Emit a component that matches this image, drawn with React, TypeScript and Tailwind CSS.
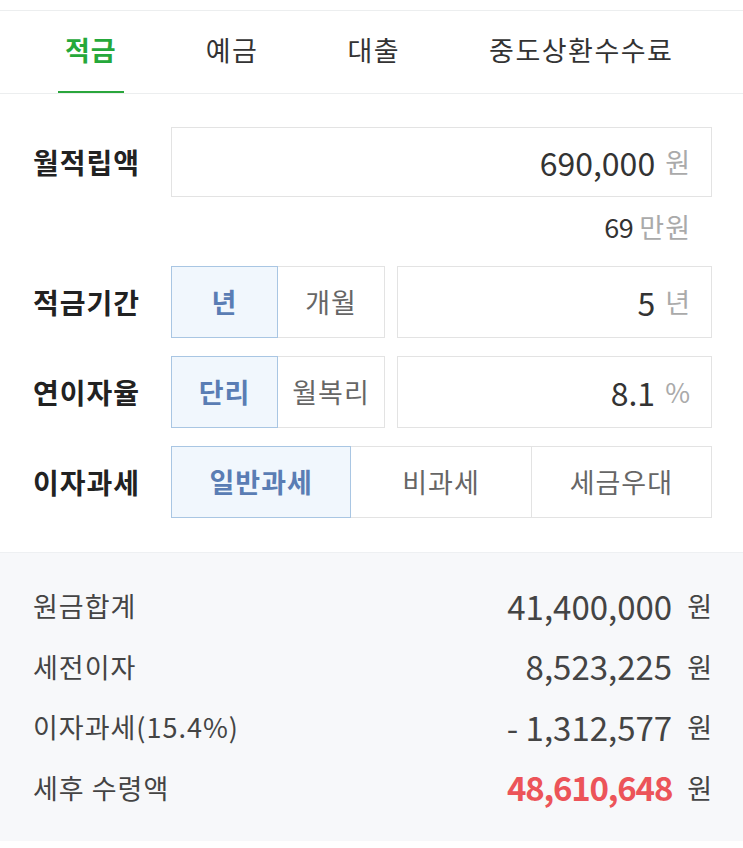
import { useState } from "react";

const tabs = ["적금", "예금", "대출", "중도상환수수료"];

const results = [
  { label: "원금합계", value: "41,400,000", red: false },
  { label: "세전이자", value: "8,523,225", red: false },
  { label: "이자과세(15.4%)", value: "- 1,312,577", red: false },
  { label: "세후 수령액", value: "48,610,648", red: true },
];

function Toggle({
  options,
  active,
  onChange,
  className,
}: {
  options: string[];
  active: number;
  onChange: (i: number) => void;
  className: string;
}) {
  return (
    <div className={className}>
      {options.map((o, i) => (
        <button
          key={o}
          onClick={() => onChange(i)}
          className={
            i === active
              ? "relative z-10 flex items-center justify-center border border-[#a9c6e3] bg-[#f1f7fd] text-[27px] font-bold tracking-[1px] text-[#5a7db4]"
              : "-ml-px flex items-center justify-center border border-[#e3e3e3] bg-white text-[27px] tracking-[1px] text-[#666]"
          }
        >
          {o}
        </button>
      ))}
    </div>
  );
}

function ValueBox({ value, unit }: { value: string; unit: string }) {
  return (
    <div className="flex flex-1 items-center justify-end gap-[10px] border border-[#e3e3e3] bg-white pr-[21px]">
      <span className="text-[32px] text-[#333]">{value}</span>
      <span className="text-[27px] text-[#aaa]">{unit}</span>
    </div>
  );
}

export default function App() {
  const [tab, setTab] = useState(0);
  const [period, setPeriod] = useState(0);
  const [rate, setRate] = useState(0);
  const [tax, setTax] = useState(0);

  return (
    <div className="min-h-[848px] bg-white pt-[10px] font-['Noto_Sans_CJK_KR',sans-serif]">
      {/* tabs */}
      <div className="flex h-[84px] gap-[75px] border-y border-[#eceeef] pl-[58px]">
        {tabs.map((t, i) => (
          <button
            key={t}
            onClick={() => setTab(i)}
            className={
              i === tab
                ? "flex items-center border-b-2 border-[#2aa63c] px-[7px] pb-[2px] text-[27px] font-bold tracking-[1px] text-[#25a83a]"
                : "flex items-center border-b-2 border-transparent px-[7px] pb-[2px] text-[27px] tracking-[1.5px] text-[#333]"
            }
          >
            {t}
          </button>
        ))}
      </div>

      {/* form */}
      <div className="pl-[33px] pr-[31px] pt-[33px] pb-[34px]">
        <div className="flex h-[70px]">
          <div className="flex w-[138px] items-center text-[28px] font-bold tracking-[1px] text-[#222]">월적립액</div>
          <ValueBox value="690,000" unit="원" />
        </div>
        <div className="mt-[10px] flex h-[40px] items-center justify-end gap-[6px] pr-[21px]">
          <span className="text-[27px] tracking-[-0.5px] text-[#333]">69</span>
          <span className="text-[27px] tracking-[1px] text-[#aaa]">만원</span>
        </div>

        <div className="mt-[19px] flex flex-col gap-[18px]">
          <div className="flex h-[72px]">
            <div className="flex w-[138px] items-center text-[28px] font-bold tracking-[1px] text-[#222]">적금기간</div>
            <Toggle
              options={["년", "개월"]}
              active={period}
              onChange={setPeriod}
              className="mr-[12px] grid w-[214px] grid-cols-2"
            />
            <ValueBox value="5" unit="년" />
          </div>
          <div className="flex h-[72px]">
            <div className="flex w-[138px] items-center text-[28px] font-bold tracking-[1px] text-[#222]">연이자율</div>
            <Toggle
              options={["단리", "월복리"]}
              active={rate}
              onChange={setRate}
              className="mr-[12px] grid w-[214px] grid-cols-2"
            />
            <ValueBox value="8.1" unit="%" />
          </div>
          <div className="flex h-[72px]">
            <div className="flex w-[138px] items-center text-[28px] font-bold tracking-[1px] text-[#222]">이자과세</div>
            <Toggle
              options={["일반과세", "비과세", "세금우대"]}
              active={tax}
              onChange={setTax}
              className="grid flex-1 grid-cols-3"
            />
          </div>
        </div>
      </div>

      {/* results */}
      <div className="border-t border-[#eef0f2] bg-[#f7f8fa] pl-[33px] pr-[31px] pt-[23px] pb-[23px]">
        {results.map((r) => (
          <div key={r.label} className="flex h-[60.5px] items-center justify-between">
            <span className="text-[27px] tracking-[1px] text-[#444]">{r.label}</span>
            <div className="flex items-center gap-[15px]">
              <span
                className={
                  r.red
                    ? "text-[33px] font-bold tracking-[-1.2px] text-[#ec5459]"
                    : "text-[33px] text-[#444]"
                }
              >
                {r.value}
              </span>
              <span className="text-[27px] text-[#444]">원</span>
            </div>
          </div>
        ))}
      </div>
    </div>
  );
}
